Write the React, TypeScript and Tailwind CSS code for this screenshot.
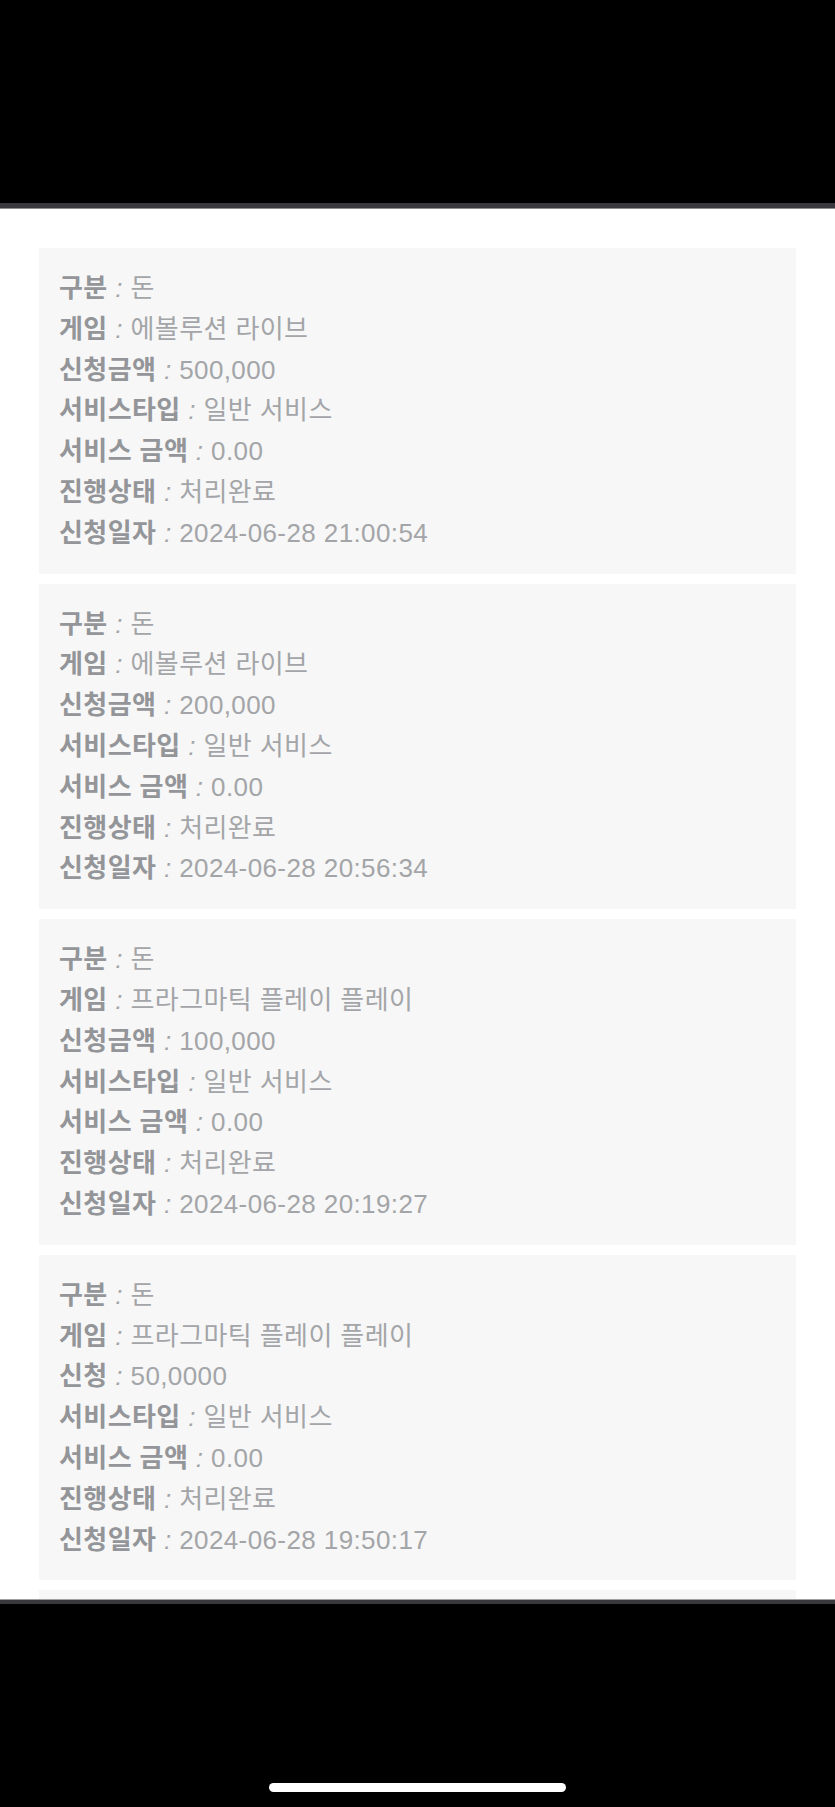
import React from "react";

type Entry = {
  kind: string;
  game: string;
  amountLabel: string;
  amount: string;
  serviceType: string;
  serviceAmount: string;
  status: string;
  date: string;
};

const entries: Entry[] = [
  { kind: "돈", game: "에볼루션 라이브", amountLabel: "신청금액", amount: "500,000", serviceType: "일반 서비스", serviceAmount: "0.00", status: "처리완료", date: "2024-06-28 21:00:54" },
  { kind: "돈", game: "에볼루션 라이브", amountLabel: "신청금액", amount: "200,000", serviceType: "일반 서비스", serviceAmount: "0.00", status: "처리완료", date: "2024-06-28 20:56:34" },
  { kind: "돈", game: "프라그마틱 플레이 플레이", amountLabel: "신청금액", amount: "100,000", serviceType: "일반 서비스", serviceAmount: "0.00", status: "처리완료", date: "2024-06-28 20:19:27" },
  { kind: "돈", game: "프라그마틱 플레이 플레이", amountLabel: "신청", amount: "50,0000", serviceType: "일반 서비스", serviceAmount: "0.00", status: "처리완료", date: "2024-06-28 19:50:17" },
  { kind: "돈", game: "에볼루션 라이브", amountLabel: "신청금액", amount: "300,000", serviceType: "일반 서비스", serviceAmount: "0.00", status: "처리완료", date: "2024-06-28 19:20:05" },
];

function Row({ label, value }: { label: string; value: string }) {
  return (
    <div className="whitespace-nowrap">
      <span className="font-bold text-[#939599]">{label}</span>
      <span className="text-[#a3a5a8]">
        {" "}
        <i>:</i> {value}
      </span>
    </div>
  );
}

function HistoryCard({ e }: { e: Entry }) {
  return (
    <div className="shrink-0 bg-[#f7f7f7] px-[20px] py-[20px] text-[26px] leading-[40.8px] tracking-[0.4px]">
      <Row label="구분" value={e.kind} />
      <Row label="게임" value={e.game} />
      <Row label={e.amountLabel} value={e.amount} />
      <Row label="서비스타입" value={e.serviceType} />
      <Row label="서비스 금액" value={e.serviceAmount} />
      <Row label="진행상태" value={e.status} />
      <Row label="신청일자" value={e.date} />
    </div>
  );
}

export default function App() {
  return (
    <div
      className="flex h-[1807px] w-[835px] flex-col overflow-hidden bg-white"
      style={{ fontFamily: '"Liberation Sans", "Noto Sans CJK KR", sans-serif' }}
    >
      {/* top status area */}
      <div className="h-[203px] shrink-0 bg-black" />
      <div className="h-[5px] shrink-0 bg-[#38383e]" />
      <div className="h-px shrink-0 bg-[#8c8c90]" />

      {/* list */}
      <div className="flex h-[1390px] shrink-0 flex-col gap-[10px] overflow-hidden px-[39px] pt-[39px]">
        {entries.map((e, i) => (
          <HistoryCard key={i} e={e} />
        ))}
      </div>

      {/* bottom bar */}
      <div className="h-px shrink-0 bg-[#a0a0a0]" />
      <div className="h-[4px] shrink-0 bg-[#38383a]" />
      <div className="flex h-[203px] shrink-0 justify-center bg-black">
        <div className="mt-[179px] h-[9px] w-[297px] rounded-full bg-white" />
      </div>
    </div>
  );
}
